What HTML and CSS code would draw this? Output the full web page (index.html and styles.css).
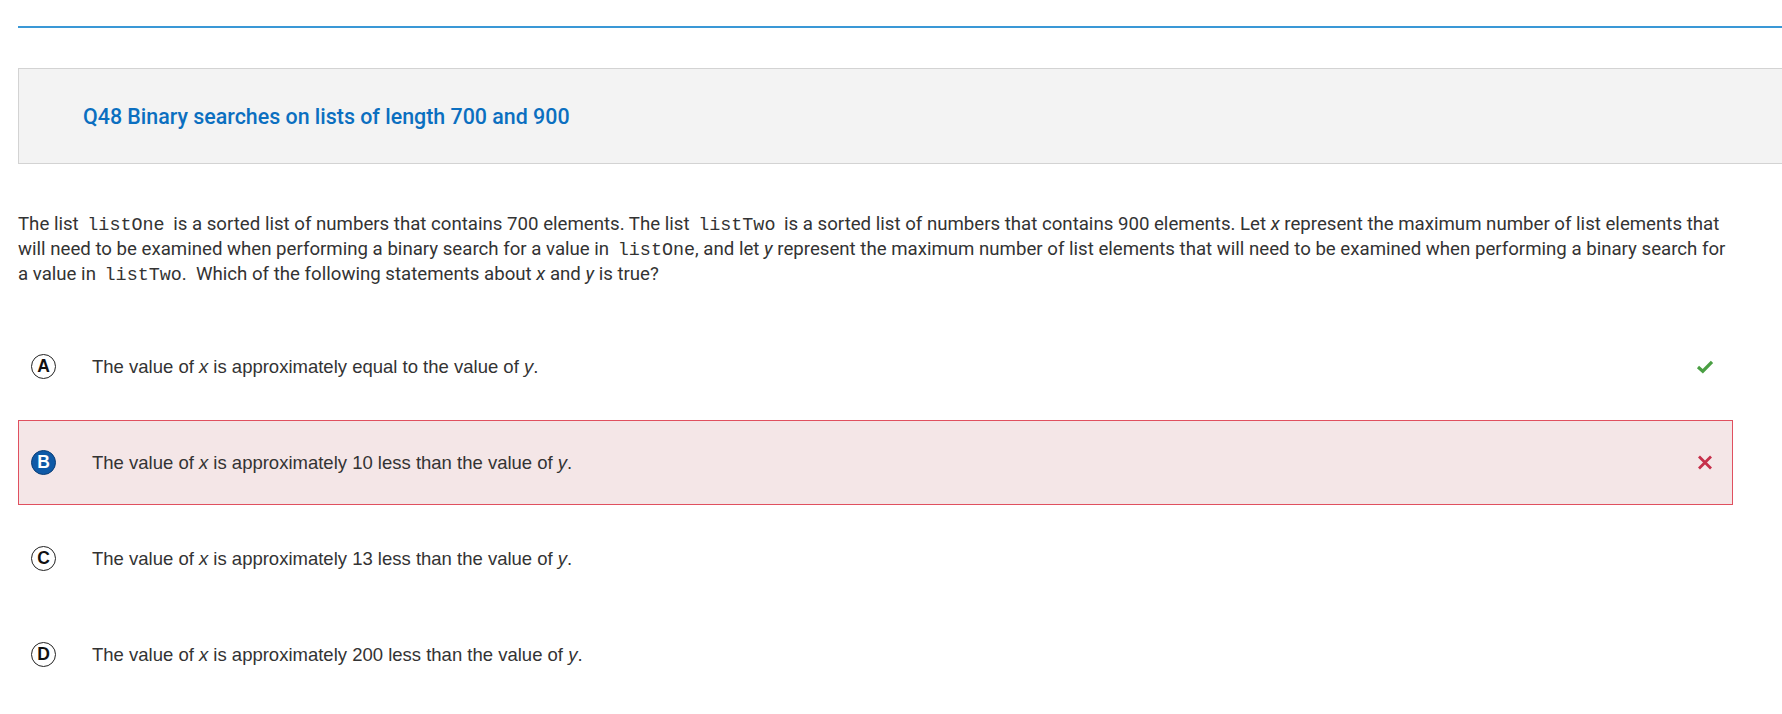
FILE: index.html
```html
<!DOCTYPE html>
<html>
<head>
<meta charset="utf-8">
<link rel="stylesheet" href="styles.css">
</head>
<body>
<div class="page">
  <div class="topline"></div>
  <div class="qhead">
    <h2 class="qtitle">Q48 Binary searches on lists of length 700 and 900</h2>
  </div>
  <div class="content">
    <p class="stem">The list <code>listOne</code> is a sorted list of numbers that contains 700 elements. The list <code>listTwo</code> is a sorted list of numbers that contains 900 elements. Let <i>x</i> represent the maximum number of list elements that will need to be examined when performing a binary search for a value in <code class="tight">listOne</code>, and let <i>y</i> represent the maximum number of list elements that will need to be examined when performing a binary search for a value in <code class="tight">listTwo</code>.&nbsp; Which of the following statements about <i>x</i> and <i>y</i> is true?</p>
    <ul class="choices">
      <li class="choice">
        <span class="letter">A</span>
        <span class="ctext">The value of <i>x</i> is approximately equal to the value of <i>y</i>.</span>
        <svg class="mark" width="18" height="15" viewBox="0 0 18 15"><path d="M2 8 L6.8 12.2 L16 2.8" fill="none" stroke="#4a9f43" stroke-width="3.2"/></svg>
      </li>
      <li class="choice wrong">
        <span class="letter selected">B</span>
        <span class="ctext">The value of <i>x</i> is approximately 10 less than the value of <i>y</i>.</span>
        <svg class="mark" width="18" height="15" viewBox="0 0 18 15"><path d="M3 1.5 L15 13.5 M15 1.5 L3 13.5" fill="none" stroke="#c62f4a" stroke-width="2.8"/></svg>
      </li>
      <li class="choice">
        <span class="letter">C</span>
        <span class="ctext">The value of <i>x</i> is approximately 13 less than the value of <i>y</i>.</span>
      </li>
      <li class="choice">
        <span class="letter">D</span>
        <span class="ctext">The value of <i>x</i> is approximately 200 less than the value of <i>y</i>.</span>
      </li>
    </ul>
  </div>
</div>
</body>
</html>
```
FILE: styles.css
```css
html, body {
  margin: 0;
  padding: 0;
  background: #ffffff;
  overflow: hidden;
}
.page {
  padding-left: 18px;
  padding-top: 26px;
}
.topline {
  height: 2px;
  background: #3a98d6;
}
.qhead {
  margin-top: 40px;
  height: 94px;
  background: #f3f3f3;
  border: 1px solid #d3d3d3;
  border-right: none;
  display: flex;
  align-items: center;
  padding-left: 64px;
}
.qtitle {
  margin: 0;
  font-family: Roboto, "Liberation Sans", sans-serif;
  font-weight: 500;
  font-size: 21.4px;
  color: #0b6fc0;
}
.content {
  width: 1715px;
}
.stem {
  margin: 48px 0 0 0;
  font-family: Roboto, "Liberation Sans", sans-serif;
  font-size: 18.65px;
  line-height: 25px;
  color: #333333;
}
.stem code {
  font-family: "Liberation Mono", "DejaVu Sans Mono", monospace;
  font-size: 18.4px;
  line-height: 1;
  padding: 0 4px;
  color: #333333;
}
.stem code.tight {
  padding-right: 0;
}
.choices {
  list-style: none;
  margin: 37px 0 0 0;
  padding: 0;
  display: flex;
  flex-direction: column;
  gap: 11px;
}
.choice {
  height: 83px;
  border: 1px solid transparent;
  display: flex;
  align-items: center;
  font-family: "Liberation Sans", Arial, sans-serif;
  font-size: 18.5px;
  color: #333333;
}
.choice.wrong {
  background: #f4e6e7;
  border-color: #e0505f;
}
.letter {
  margin-left: 12px;
  width: 23px;
  height: 23px;
  border: 1px solid #222;
  border-radius: 50%;
  display: flex;
  align-items: center;
  justify-content: center;
  font-family: "Liberation Sans", Arial, sans-serif;
  font-weight: bold;
  font-size: 17.5px;
  color: #111;
  flex: none;
}
.letter.selected {
  background: #0f5aa7;
  border-color: #0b3f78;
  color: #ffffff;
}
.ctext {
  margin-left: 36px;
  flex: 1;
}
.mark {
  margin-right: 18px;
  flex: none;
}
```
